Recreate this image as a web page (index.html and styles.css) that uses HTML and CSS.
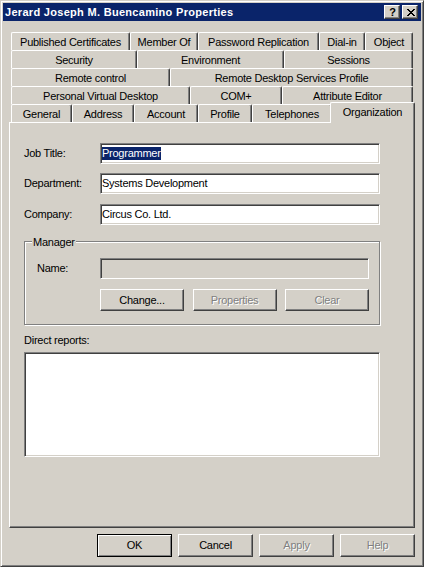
FILE: index.html
```html
<!DOCTYPE html>
<html>
<head>
<meta charset="utf-8">
<title>Properties</title>
<link rel="stylesheet" href="styles.css">
</head>
<body>
<div class="window">
  <div class="titlebar">
    <span class="title">Jerard Joseph M. Buencamino Properties</span>
    <div class="caps">
      <span class="capbtn help">?</span>
      <span class="capbtn close">
        <svg width="8" height="7" viewBox="0 0 8 7" shape-rendering="crispEdges"><path fill="#000" d="M0 0h2v1h-2zM6 0h2v1h-2zM1 1h2v1h-2zM5 1h2v1h-2zM2 2h4v1h-4zM3 3h2v1h-2zM2 4h4v1h-4zM1 5h2v1h-2zM5 5h2v1h-2zM0 6h2v1h-2zM6 6h2v1h-2z"/></svg>
      </span>
    </div>
  </div>

  <div class="tabs">
    <div class="tabrow r1">
      <div class="tab">Published Certificates</div>
      <div class="tab">Member Of</div>
      <div class="tab">Password Replication</div>
      <div class="tab">Dial-in</div>
      <div class="tab">Object</div>
    </div>
    <div class="tabrow r2">
      <div class="tab">Security</div>
      <div class="tab">Environment</div>
      <div class="tab">Sessions</div>
    </div>
    <div class="tabrow r3">
      <div class="tab">Remote control</div>
      <div class="tab">Remote Desktop Services Profile</div>
    </div>
    <div class="tabrow r4">
      <div class="tab">Personal Virtual Desktop</div>
      <div class="tab">COM+</div>
      <div class="tab">Attribute Editor</div>
    </div>
    <div class="tabrow r5">
      <div class="tab">General</div>
      <div class="tab">Address</div>
      <div class="tab">Account</div>
      <div class="tab">Profile</div>
      <div class="tab">Telephones</div>
      <div class="tab active">Organization</div>
    </div>
  </div>

  <div class="panel">
    <div class="field">
      <span class="label">Job Title:</span>
      <div class="input"><span class="selected">Programmer</span></div>
    </div>
    <div class="field">
      <span class="label">Department:</span>
      <div class="input">Systems Development</div>
    </div>
    <div class="field last">
      <span class="label">Company:</span>
      <div class="input">Circus Co. Ltd.</div>
    </div>

    <div class="group">
      <span class="legend">Manager</span>
      <div class="field">
        <span class="label small">Name:</span>
        <div class="input disabled narrow"></div>
      </div>
      <div class="btnrow">
        <div class="btn gbtn">Change...</div>
        <div class="btn gbtn disabled">Properties</div>
        <div class="btn gbtn disabled">Clear</div>
      </div>
    </div>

    <div class="reports-label">Direct reports:</div>
    <div class="listbox"></div>
  </div>

  <div class="footer">
    <div class="btn fbtn default">OK</div>
    <div class="btn fbtn">Cancel</div>
    <div class="btn fbtn disabled">Apply</div>
    <div class="btn fbtn disabled">Help</div>
  </div>
</div>
</body>
</html>
```
FILE: styles.css
```css
* {
  box-sizing: border-box;
}

html, body {
  margin: 0;
  padding: 0;
}

body {
  background: #d4d0c8;
  font-family: "Liberation Sans", Arial, sans-serif;
  font-size: 11px;
  letter-spacing: -0.25px;
  color: #000;
}

.window {
  width: 424px;
  height: 567px;
  background: #d4d0c8;
  border: 1px solid;
  border-color: #d4d0c8 #404040 #404040 #d4d0c8;
  box-shadow: inset 1px 1px #fff, inset -1px -1px #808080;
  padding: 2px;
  display: flex;
  flex-direction: column;
}

/* Title bar */
.titlebar {
  height: 18px;
  flex: none;
  background: #0a246a;
  color: #fff;
  display: flex;
  justify-content: space-between;
  align-items: flex-start;
  padding: 0 3px 0 2px;
}

.title {
  font-weight: bold;
  line-height: 18px;
  letter-spacing: 0.3px;
  white-space: nowrap;
}

.caps {
  display: flex;
  gap: 2px;
  padding-top: 2px;
}

.capbtn {
  width: 16px;
  height: 14px;
  background: #d4d0c8;
  border: 1px solid;
  border-color: #fff #404040 #404040 #fff;
  box-shadow: inset -1px -1px #808080;
  display: flex;
  align-items: center;
  justify-content: center;
  color: #000;
}

.help {
  font-weight: bold;
  font-size: 11px;
  line-height: 12px;
  letter-spacing: 0;
  padding-left: 1px;
}

.close svg {
  display: block;
  margin-left: 1px;
}

/* Tabs */
.tabs {
  flex: none;
  margin: 11px 0 0 8px;
  width: 402px;
  display: flex;
  flex-direction: column;
  position: relative;
  z-index: 1;
}

.tabrow {
  display: grid;
  height: 18px;
}

.r1 { grid-template-columns: 119px 68px 121px 46px 48px; }
.r2 { grid-template-columns: 126px 147px 129px; }
.r3 { grid-template-columns: 159px 243px; }
.r4 { grid-template-columns: 179px 92px 131px; }
.r5 { grid-template-columns: 61px 62px 64px 54px 80px 81px; }

.tab {
  height: 18px;
  align-self: start;
  background: #d4d0c8;
  border-top: 1px solid #fff;
  border-left: 1px solid #fff;
  border-right: 1px solid #404040;
  box-shadow: inset -1px 0 #808080;
  border-radius: 2px 2px 0 0;
  padding-top: 1px;
  line-height: 16px;
  text-align: center;
  white-space: nowrap;
  overflow: hidden;
}

.tab.active {
  position: relative;
  margin: -2px -2px 0 -2px;
  height: 21px;
}

/* Panel */
.panel {
  flex: none;
  margin-left: 6px;
  width: 406px;
  height: 406px;
  border: 1px solid;
  border-color: #fff #404040 #404040 #fff;
  box-shadow: inset -1px -1px #808080;
  padding: 20px 0 0 14px;
}

.field {
  display: flex;
  align-items: center;
  height: 21px;
}

.field + .field {
  margin-top: 9px;
}

.field.last {
  margin-top: 10px;
}

.label {
  width: 76px;
  flex: none;
  line-height: 13px;
  white-space: nowrap;
}

.label.small {
  width: 63px;
}

.input {
  width: 280px;
  height: 21px;
  flex: none;
  background: #fff;
  border: 1px solid;
  border-color: #808080 #fff #fff #808080;
  box-shadow: inset 1px 1px #404040, inset -1px -1px #d4d0c8;
  padding: 3px 1px 0 1px;
  line-height: 13px;
  white-space: nowrap;
  overflow: hidden;
}

.input.disabled {
  background: #d4d0c8;
}

.input.narrow {
  width: 269px;
}

.selected {
  display: inline-block;
  background: #0a246a;
  color: #fff;
  line-height: 13px;
}

/* Group box */
.group {
  position: relative;
  margin-top: 16px;
  width: 356px;
  border: 1px solid #808080;
  box-shadow: inset 1px 1px #fff, 1px 1px #fff;
  padding: 16px 0 13px 12px;
}

.legend {
  position: absolute;
  top: -6px;
  left: 7px;
  background: #d4d0c8;
  padding: 0 1px;
  line-height: 13px;
}

.btnrow {
  margin: 10px 0 0 63px;
  width: 269px;
  display: flex;
  justify-content: space-between;
}

.btn {
  background: #d4d0c8;
  border: 1px solid;
  border-color: #fff #404040 #404040 #fff;
  box-shadow: inset -1px -1px #808080;
  display: flex;
  align-items: center;
  justify-content: center;
  white-space: nowrap;
  line-height: 13px;
}

.btn.disabled {
  color: #808080;
  text-shadow: 1px 1px #fff;
}

.btn.default {
  border-color: #000;
  box-shadow: inset 1px 1px #fff, inset -1px -1px #808080;
}

.gbtn {
  width: 84px;
  height: 22px;
}

.reports-label {
  margin-top: 9px;
  line-height: 13px;
}

.listbox {
  margin-top: 5px;
  width: 356px;
  height: 105px;
  background: #fff;
  border: 1px solid;
  border-color: #808080 #fff #fff #808080;
  box-shadow: inset 1px 1px #404040, inset -1px -1px #d4d0c8;
}

/* Footer buttons */
.footer {
  flex: none;
  display: flex;
  justify-content: flex-end;
  gap: 6px;
  margin-top: 6px;
  padding-right: 6px;
}

.fbtn {
  width: 75px;
  height: 23px;
}
```
